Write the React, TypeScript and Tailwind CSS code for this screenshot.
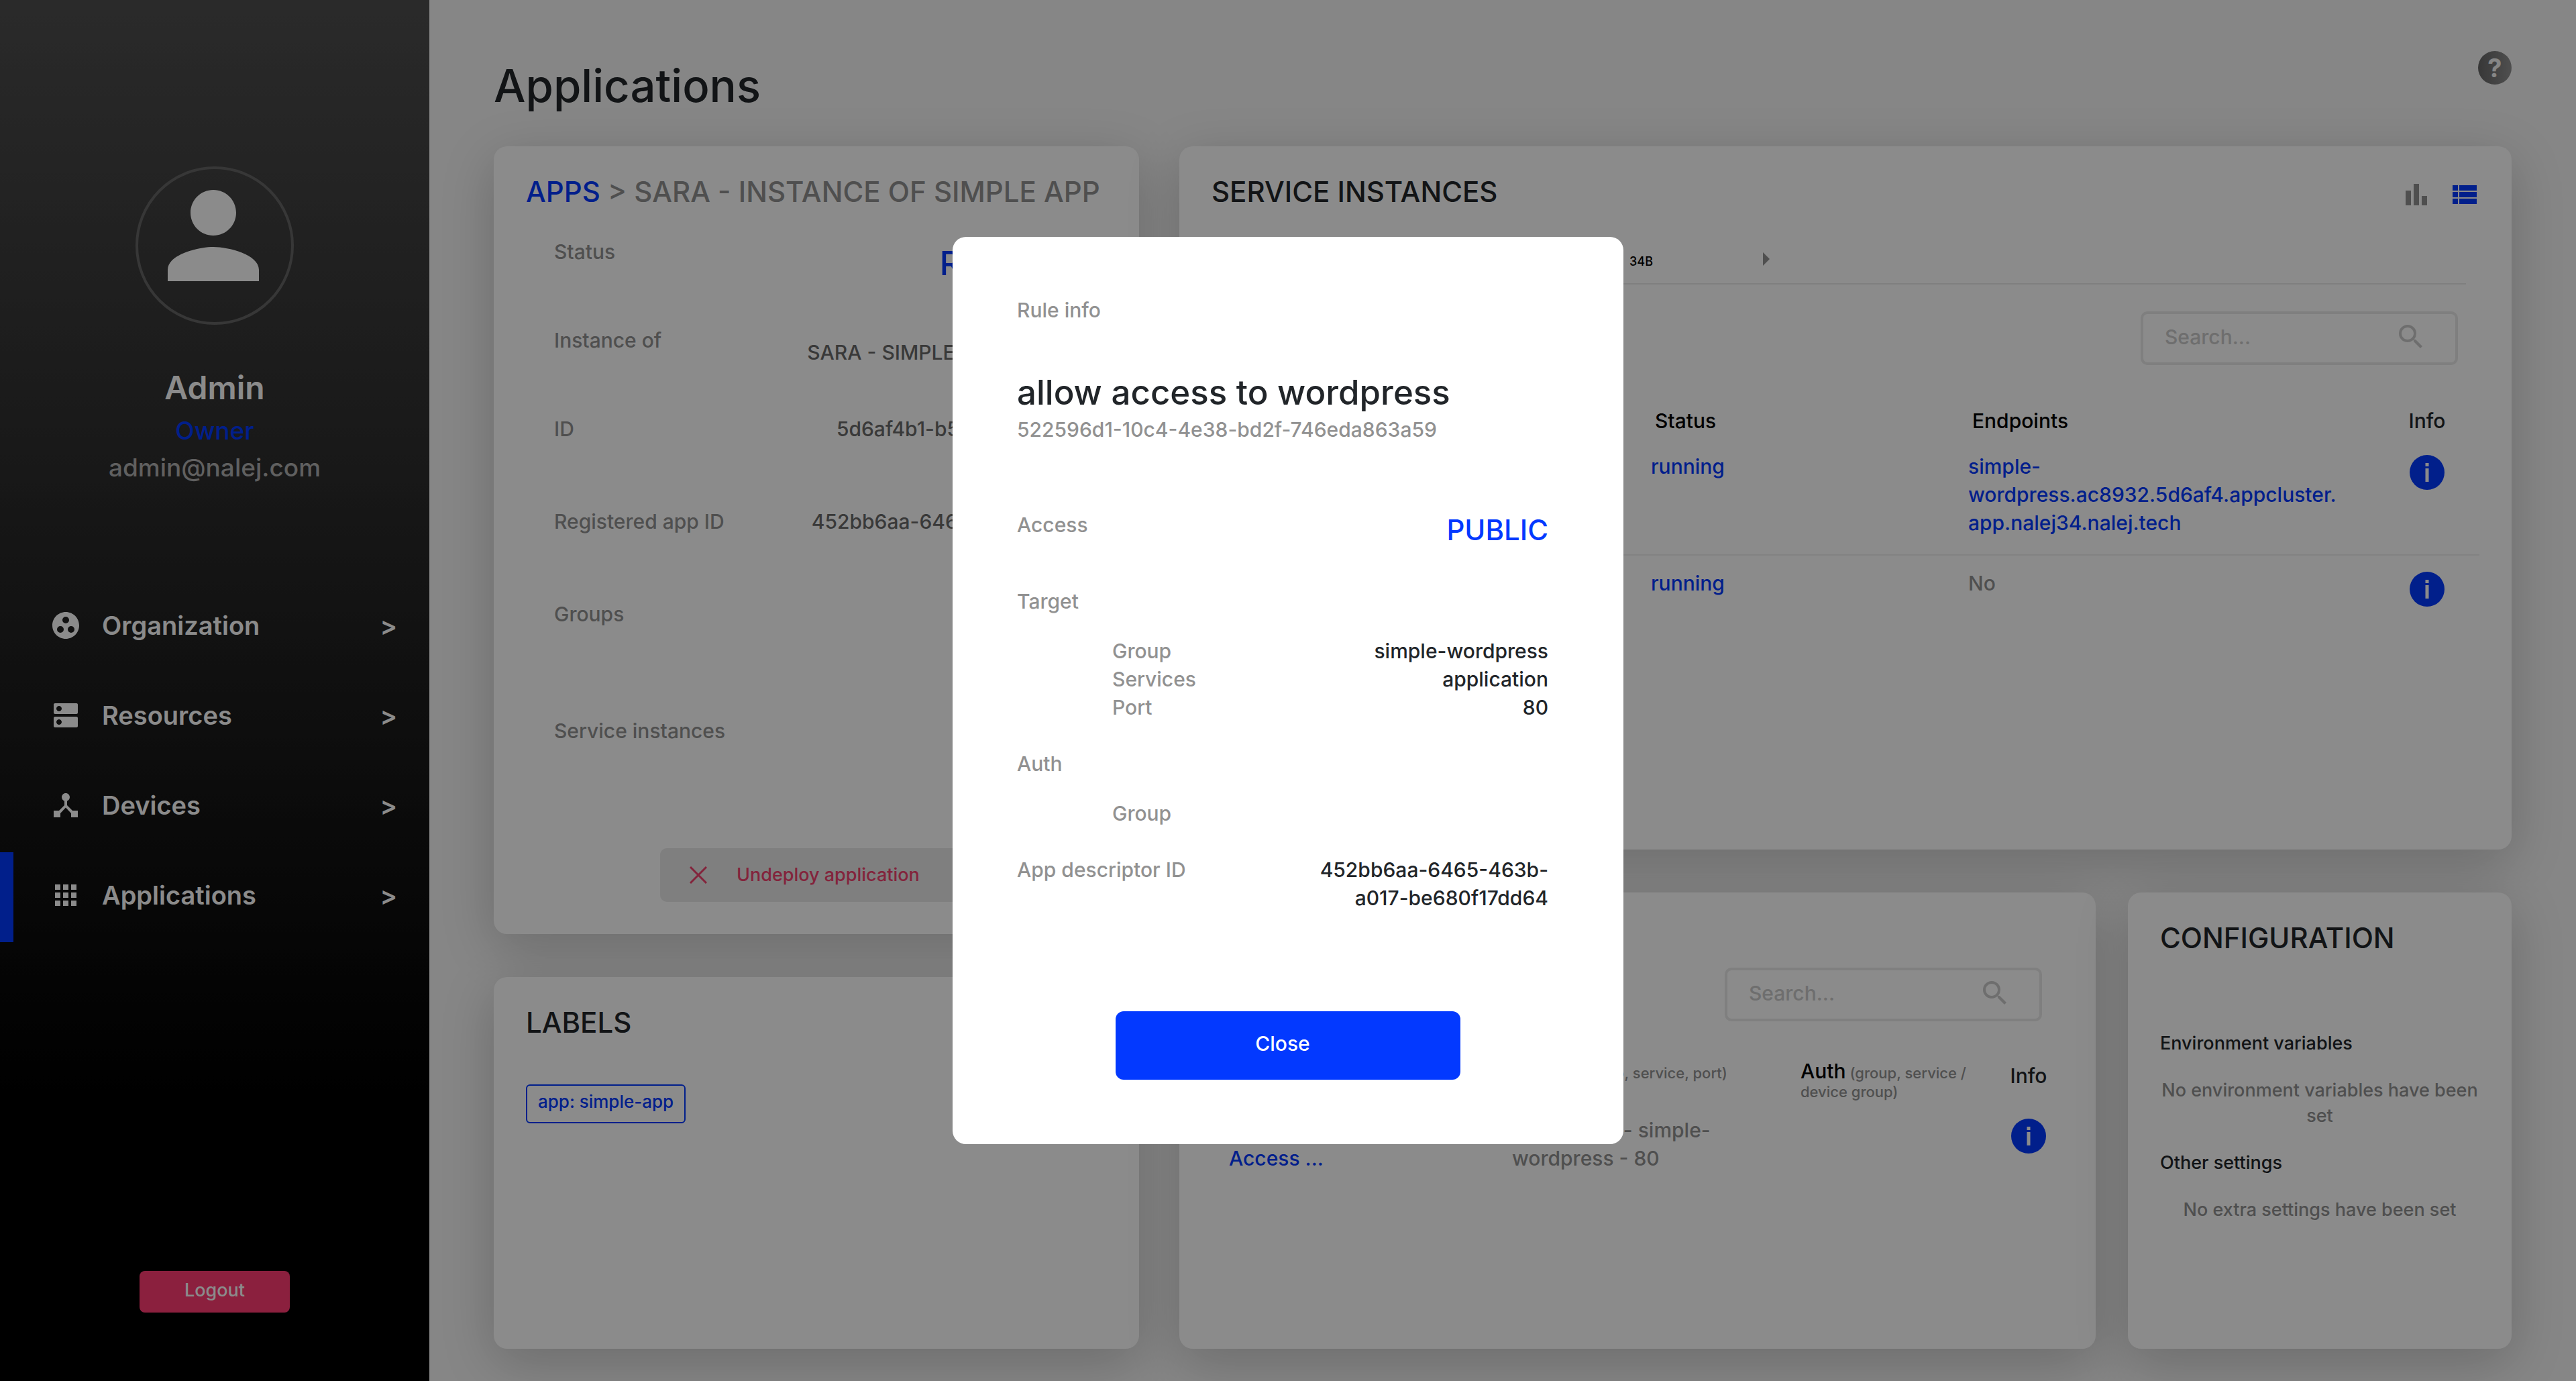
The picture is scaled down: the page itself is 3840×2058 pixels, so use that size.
import React from 'react';
import {
  MdApps,
  MdArrowLeft,
  MdArrowRight,
  MdBarChart,
  MdDeviceHub,
  MdDns,
  MdGroupWork,
  MdPerson,
  MdSearch,
  MdViewList,
} from 'react-icons/md';

const CARD = 'rounded-[20px] bg-white shadow-[0_20px_80px_rgba(0,0,0,0.2)]';
const HEADING = 'text-[42px] leading-[48px] font-medium';

const navItems = [
  { label: 'Organization', Icon: MdGroupWork },
  { label: 'Resources', Icon: MdDns },
  { label: 'Devices', Icon: MdDeviceHub },
  { label: 'Applications', Icon: MdApps, active: true },
];

function Sidebar() {
  return (
    <aside className="flex w-1/6 shrink-0 flex-col items-center bg-[linear-gradient(#4e4e4e,#000_80%)] pt-[248px] pb-[102px] text-white">
      <div className="flex size-[236px] items-center justify-center rounded-full border-4 border-[#666] pr-1 pb-[30px]">
        <MdPerson className="size-[204px] shrink-0" />
      </div>
      <p className="mt-16 text-5xl leading-[60px] font-semibold">Admin</p>
      <p className="mt-1.5 text-[37px] leading-[55px] font-medium text-[#0339ff]">Owner</p>
      <p className="text-[37px] leading-[55px] font-medium text-[#b0b0b0]">admin@nalej.com</p>
      <nav className="mt-36 w-full">
        {navItems.map(({ label, Icon, active }) => (
          <a
            key={label}
            href="#"
            className={`flex h-[134px] items-center border-l-20 pr-12 pb-1.5 pl-[54px] text-[38px] font-semibold ${
              active ? 'border-[#0339ff]' : 'border-transparent'
            }`}
          >
            <Icon className="size-12 shrink-0" />
            <span className="ml-[30px] grow">{label}</span>
            <span>&gt;</span>
          </a>
        ))}
      </nav>
      <button className="mt-auto h-[62px] w-[224px] rounded-lg bg-[#ff3b73] pb-1 text-[27px] font-medium">
        Logout
      </button>
    </aside>
  );
}

function InfoIcon() {
  return (
    <button aria-label="Info" className="inline-block size-[52px] align-top">
      <svg viewBox="0 0 52 52" className="size-[52px]">
        <circle cx="26" cy="26" r="26" fill="#0339ff" />
        <rect x="23.5" y="12" width="5" height="5" fill="#fff" />
        <rect x="23.5" y="20" width="5" height="20" fill="#fff" />
      </svg>
    </button>
  );
}

function Search({ label }: { label: string }) {
  return (
    <label className="flex h-20 w-[473px] items-center rounded-[10px] border-4 border-[#e9e9e9] pr-[42px] pb-1 pl-8 text-[#cacaca]">
      <input
        aria-label={label}
        placeholder="Search..."
        className="w-full min-w-0 bg-transparent text-[30px] font-medium outline-none placeholder:text-[#cacaca]"
      />
      <MdSearch className="size-12 shrink-0" />
    </label>
  );
}

const details = [
  { label: 'Status', row: 'min-h-[132px]', value: 'pt-[18px] text-[49px] text-[#0339ff]', text: 'RUNNING' },
  { label: 'Instance of', row: 'min-h-[132px]', value: 'pt-[18px] text-[#696969]', text: 'SARA - SIMPLE APPLICATION' },
  { label: 'ID', row: 'min-h-[138px]', value: 'text-[#696969]', text: '5d6af4b1-b524-4117-a141-36c6c4c2f6d1' },
  { label: 'Registered app ID', row: 'min-h-[138px]', value: 'text-[#696969]', text: '452bb6aa-6465-463b-a017-be680f17dd64' },
  { label: 'Groups', row: 'min-h-[174px]', value: 'text-[#696969]', text: '1' },
  { label: 'Service instances', row: 'min-h-[196px]', value: 'text-[#696969]', text: '2' },
];

function InstanceCard() {
  return (
    <section className={`${CARD} px-12 pt-11 pb-12`}>
      <h2 className={`${HEADING} whitespace-nowrap text-[#919191]`}>
        <a href="#" className="text-[#0339ff]">APPS</a> &gt; SARA - INSTANCE OF SIMPLE APP
      </h2>
      <dl className="mt-11 pr-5 pl-[42px] text-[30px] leading-[42px] font-medium">
        {details.map((d) => (
          <div key={d.label} className={`flex justify-between ${d.row}`}>
            <dt className="text-[#919191]">{d.label}</dt>
            <dd className={`max-w-[436px] text-right ${d.value}`}>{d.text}</dd>
          </div>
        ))}
      </dl>
      <button className="mx-auto flex h-20 w-[466px] items-center rounded-[10px] bg-[#e9e9e9] pl-11 text-[27px] font-medium text-[#f0426f]">
        <svg viewBox="0 0 26 26" className="size-[26px]" fill="none" stroke="currentColor" strokeWidth="3">
          <path d="M1 1 25 25M25 1 1 25" />
        </svg>
        <span className="ml-11">Undeploy application</span>
      </button>
    </section>
  );
}

function LabelsCard() {
  return (
    <section className={`${CARD} flex-1 px-12 pt-11`}>
      <h2 className={HEADING}>LABELS</h2>
      <span className="mt-[68px] inline-block rounded-md border-2 border-[#0339ff] px-4 pt-1.5 pb-3 text-[26px] leading-9 font-medium text-[#0339ff]">
        app: simple-app
      </span>
    </section>
  );
}

function ServicesCard() {
  return (
    <section className={`${CARD} pt-11`}>
      <div className="flex items-start pr-[46px] pl-12">
        <h2 className={`${HEADING} grow`}>SERVICE INSTANCES</h2>
        <button aria-label="Chart view" className="mt-1 text-[#919191]">
          <MdBarChart className="size-12" />
        </button>
        <button aria-label="List view" className="mt-1 ml-6 text-[#0339ff]">
          <MdViewList className="size-12" />
        </button>
      </div>
      <div className="mx-[68px] mt-12 flex h-[62px] items-start border-b-2 border-[#e9e9e9] text-[#919191]">
        <button aria-label="Previous">
          <MdArrowLeft className="size-12" />
        </button>
        <button className="w-[590px] pt-4 text-right text-lg leading-6 font-medium text-black">34B</button>
        <button aria-label="Next" className="ml-[144px]">
          <MdArrowRight className="size-12" />
        </button>
      </div>
      <div className="mt-10 flex justify-end pr-20">
        <Search label="Search service instances" />
      </div>
      <div className="mt-[62px] px-12">
        <table className="w-full table-fixed text-left text-[30px] leading-[42px] font-medium">
          <colgroup>
            <col className="w-[655px]" />
            <col className="w-[473px]" />
            <col />
            <col className="w-[156px]" />
          </colgroup>
          <thead>
            <tr className="text-black">
              <th className="pb-1.5 font-medium">Name</th>
              <th className="pb-1.5 pl-1.5 font-medium">Status</th>
              <th className="pb-1.5 pl-1.5 font-medium">Endpoints</th>
              <th className="pb-1.5 text-center font-medium text-[#212529]">Info</th>
            </tr>
          </thead>
          <tbody className="align-top text-[#0339ff]">
            <tr className="border-b-2 border-[#eee]">
              <td className="pt-5">simple-wordpress</td>
              <td className="pt-5">running</td>
              <td className="pt-5 pb-[26px]">
                <a href="#">
                  simple-
                  <br />
                  wordpress.ac8932.5d6af4.appcluster.
                  <br />
                  app.nalej34.nalej.tech
                </a>
              </td>
              <td className="pt-6 text-center">
                <InfoIcon />
              </td>
            </tr>
            <tr>
              <td className="pt-5">simple-mysql</td>
              <td className="pt-5">running</td>
              <td className="pt-5 text-[#919191]">No</td>
              <td className="pt-6 text-center">
                <InfoIcon />
              </td>
            </tr>
          </tbody>
        </table>
      </div>
    </section>
  );
}

function RulesCard() {
  return (
    <section className={`${CARD} min-w-0 pt-11`}>
      <h2 className={`${HEADING} pl-12`}>RULES</h2>
      <div className="mt-5 flex justify-end pr-20">
        <Search label="Search rules" />
      </div>
      <div className="mt-[60px] pr-12 pl-[74px]">
        <table className="w-full table-fixed text-left text-[30px] leading-[42px] font-medium">
          <colgroup>
            <col className="w-[422px]" />
            <col className="w-[430px]" />
            <col />
            <col className="w-[104px]" />
          </colgroup>
          <thead className="align-top text-[22px] leading-[28px] text-[#919191]">
            <tr>
              <th className="font-medium">
                <span className="text-[30px] text-black">Name</span>
              </th>
              <th className="font-medium">
                <span className="text-[30px] text-black">Target</span> (group, service, port)
              </th>
              <th className="pb-[22px] font-medium">
                <span className="text-[30px] text-black">Auth</span> (group, service / device group)
              </th>
              <th className="text-center text-[30px] leading-[42px] font-medium text-[#212529]">Info</th>
            </tr>
          </thead>
          <tbody className="align-top">
            <tr>
              <td className="text-[#0339ff]">
                Allow
                <br />
                Access ...
              </td>
              <td className="pr-24 text-[#919191]">application - simple-wordpress - 80</td>
              <td />
              <td className="pt-1 text-center">
                <InfoIcon />
              </td>
            </tr>
          </tbody>
        </table>
      </div>
    </section>
  );
}

function ConfigurationCard() {
  return (
    <section className={`${CARD} min-w-0 px-12 pt-11 text-[27px] leading-[38px] font-medium`}>
      <h2 className={HEADING}>CONFIGURATION</h2>
      <h3 className="mt-[114px]">Environment variables</h3>
      <p className="mt-8 text-center text-[#919191]">No environment variables have been set</p>
      <h3 className="mt-8">Other settings</h3>
      <p className="mt-8 text-center text-[#919191]">No extra settings have been set</p>
    </section>
  );
}

const ruleTarget = [
  ['Group', 'simple-wordpress'],
  ['Services', 'application'],
  ['Port', '80'],
];

function RuleDialog() {
  return (
    <div className="fixed inset-0 flex items-center justify-center bg-black/[.455]">
      <div
        role="dialog"
        aria-modal="true"
        aria-labelledby="rule-name"
        className="w-[1000px] rounded-[20px] bg-white px-24 pt-[88px] pb-24 text-[30px] leading-[42px] font-medium"
      >
        <p className="text-[#919191]">Rule info</p>
        <h2 id="rule-name" className="mt-[72px] text-[51px] leading-[60px]">
          allow access to wordpress
        </h2>
        <p className="mt-1 text-[#919191]">522596d1-10c4-4e38-bd2f-746eda863a59</p>
        <dl className="pr-4">
          <div className="mt-[100px] flex justify-between">
            <dt className="text-[#919191]">Access</dt>
            <dd className="pt-2 text-[42px] text-[#0339ff]">PUBLIC</dd>
          </div>
          <dt className="mt-16 text-[#919191]">Target</dt>
          <dd className="mt-8 pl-[142px]">
            <dl>
              {ruleTarget.map(([name, value]) => (
                <div key={name} className="flex justify-between">
                  <dt className="text-[#919191]">{name}</dt>
                  <dd>{value}</dd>
                </div>
              ))}
            </dl>
          </dd>
          <dt className="mt-[42px] text-[#919191]">Auth</dt>
          <dd className="mt-8 pl-[142px] text-[#919191]">Group</dd>
          <div className="mt-[42px] flex justify-between">
            <dt className="text-[#919191]">App descriptor ID</dt>
            <dd className="w-[360px] text-right">452bb6aa-6465-463b-a017-be680f17dd64</dd>
          </div>
        </dl>
        <button className="mx-auto mt-[148px] block h-[102px] w-[514px] rounded-xl bg-[#0339ff] pr-4 pb-1.5 text-white">
          Close
        </button>
      </div>
    </div>
  );
}

export default function App() {
  return (
    <div className="flex min-h-screen bg-[#f6f6f6] font-['Inter',sans-serif] text-[#212529]">
      <Sidebar />
      <main className="flex grow flex-col px-24 pt-[76px] pb-12">
        <header className="mb-[50px] flex items-start justify-between">
          <h1 className="mt-3 text-[67px] leading-[80px] font-medium">Applications</h1>
          <button
            aria-label="Help"
            className="size-[50px] rounded-full bg-linear-to-r from-[#666] to-[#919191] text-[38px] leading-[50px] font-bold text-[#f6f6f6]"
          >
            ?
          </button>
        </header>
        <div className="grid grow grid-cols-[962fr_1986fr] gap-[60px]">
          <div className="flex min-w-0 flex-col gap-16">
            <InstanceCard />
            <LabelsCard />
          </div>
          <div className="grid min-w-0 grid-rows-[1048fr_680fr] gap-16">
            <ServicesCard />
            <div className="grid grid-cols-[1366fr_572fr] gap-12">
              <RulesCard />
              <ConfigurationCard />
            </div>
          </div>
        </div>
      </main>
      <RuleDialog />
    </div>
  );
}
